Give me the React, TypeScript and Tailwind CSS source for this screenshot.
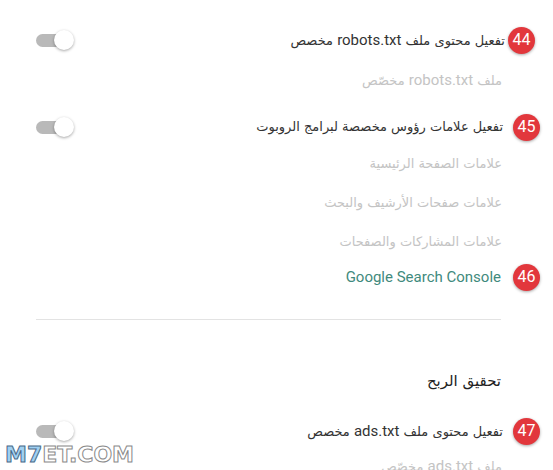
import React from "react";

function Badge({ n }: { n: string }) {
  return (
    <div className="flex h-[27px] w-[27px] shrink-0 items-center justify-center rounded-full bg-[#e2373c] text-[16px] leading-none text-white shadow-[0_1px_3px_rgba(0,0,0,0.35)] font-['Roboto',sans-serif]">
      {n}
    </div>
  );
}

function Toggle() {
  return (
    <div className="relative mr-auto h-[20px] w-[40px] shrink-0">
      <div className="absolute left-0 top-[4px] h-[13px] w-[32px] rounded-full bg-[#b9b9b9]" />
      <div className="absolute right-[2px] top-0 h-[20px] w-[20px] rounded-full bg-white shadow-[0_1px_3px_rgba(0,0,0,0.35)]" />
    </div>
  );
}

function L({ children }: { children: React.ReactNode }) {
  return <span className="text-[15px] font-['Roboto',sans-serif]">{children}</span>;
}

function MainRow({
  n,
  text,
  h,
  pr,
  gap,
}: {
  n: string;
  text: React.ReactNode;
  h: string;
  pr: string;
  gap: string;
}) {
  return (
    <div className={"flex items-center pl-[36px] " + h + " " + pr}>
      <Badge n={n} />
      <div className={"whitespace-nowrap text-[13px] text-[#333] " + gap}>{text}</div>
      <Toggle />
    </div>
  );
}

function SubRow({ text, h }: { text: React.ReactNode; h: string }) {
  return (
    <div className={"flex items-center pr-[51px] " + h}>
      <div className="whitespace-nowrap text-[13px] text-[#c4c4c4]">{text}</div>
    </div>
  );
}

export default function App() {
  return (
    <div
      dir="rtl"
      className="relative h-[470px] w-[553px] overflow-hidden bg-white font-['DejaVu_Sans',sans-serif]"
    >
      <div className="flex flex-col pt-[24px]">
        <MainRow
          n="44"
          h="h-[32px]"
          pr="pr-[18px]"
          gap="mr-[3px]"
          text={
            <>
              تفعيل محتوى ملف <L>robots.txt</L> مخصص
            </>
          }
        />
        <SubRow
          h="h-[48px]"
          text={
            <>
              ملف <L>robots.txt</L> مخصّص
            </>
          }
        />
        <MainRow
          n="45"
          h="h-[46px]"
          pr="pr-[13px]"
          gap="mr-[10px]"
          text="تفعيل علامات رؤوس مخصصة لبرامج الروبوت"
        />
        <SubRow h="h-[28px]" text="علامات الصفحة الرئيسية" />
        <SubRow h="h-[50px]" text="علامات صفحات الأرشيف والبحث" />
        <SubRow h="h-[28px]" text="علامات المشاركات والصفحات" />
        <div className="flex h-[42px] items-center pr-[13px]">
          <Badge n="46" />
          <div className="mr-[12px] whitespace-nowrap text-[15px] text-[#3f8a7d] font-['Roboto',sans-serif]">
            Google Search Console
          </div>
        </div>
        <div className="ml-[36px] mr-[52px] mt-[21px] h-px bg-[#e3e3e3]" />
        <div className="mt-[40px] flex h-[42px] items-center pr-[52px]">
          <div className="whitespace-nowrap text-[15px] text-[#222]">تحقيق الربح</div>
        </div>
        <MainRow
          n="47"
          h="h-[58px]"
          pr="pr-[13px]"
          gap="mr-[10px]"
          text={
            <>
              تفعيل محتوى ملف <L>ads.txt</L> مخصص
            </>
          }
        />
        <SubRow
          h="h-[12px]"
          text={
            <>
              ملف <L>ads.txt</L> مخصّص
            </>
          }
        />
      </div>

      <div
        dir="ltr"
        className="absolute left-[5px] top-[444px] flex text-[22px] font-bold leading-none tracking-[0px] font-['DejaVu_Sans',sans-serif]"
      >
        <span className="text-[#9fd0f2] [-webkit-text-stroke:1px_#4a6a88]">M7</span>
        <span className="text-white [-webkit-text-stroke:1px_#8a8a8a]">ET.COM</span>
      </div>
    </div>
  );
}
